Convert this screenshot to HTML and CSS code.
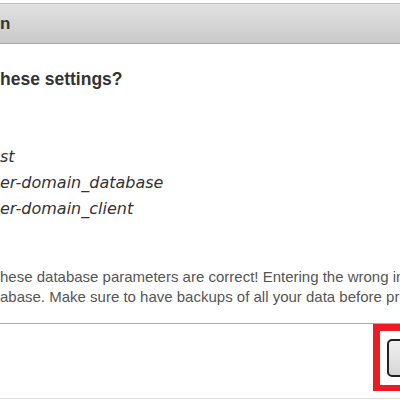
FILE: index.html
```html
<!DOCTYPE html>
<html>
<head>
<meta charset="utf-8">
<link rel="stylesheet" href="styles.css">
</head>
<body>
<div class="dialog">
  <div class="titlebar"><span class="title">n</span></div>
  <div class="content">
    <h2 class="question">hese settings?</h2>
    <div class="values">
      <div class="value">st</div>
      <div class="value">er-domain_database</div>
      <div class="value">er-domain_client</div>
    </div>
    <p class="warning">hese database parameters are correct! Entering the wrong in<br>abase. Make sure to have backups of all your data before pro</p>
  </div>
  <div class="footer">
    <div class="highlight"><button class="btn">OK</button></div>
  </div>
</div>
</body>
</html>
```
FILE: styles.css
```css
html, body {
  margin: 0;
  padding: 0;
  background: #ffffff;
  width: 400px;
  height: 400px;
  overflow: hidden;
}
.dialog {
  padding-top: 3px;
  white-space: nowrap;
}
.titlebar {
  height: 39px;
  border-top: 1px solid #bdbdbd;
  border-bottom: 1px solid #a9a9a9;
  background: linear-gradient(#e2e2e2, #c9c9c9);
  display: flex;
  align-items: center;
}
.title {
  font-family: "Liberation Sans", Arial, sans-serif;
  font-weight: bold;
  font-size: 17px;
  color: #333333;
}
.content {
  box-sizing: border-box;
  padding-top: 25px;
  height: 280px;
  border-bottom: 1px solid #aaaaaa;
  overflow: hidden;
}
.question {
  margin: 0;
  font-family: "Liberation Sans", Arial, sans-serif;
  font-weight: bold;
  font-size: 17.5px;
  line-height: 20px;
  color: #333333;
}
.values {
  margin-top: 55px;
  font-family: "DejaVu Sans", sans-serif;
  font-style: italic;
  font-size: 16px;
  line-height: 26px;
  color: #333333;
}
.warning {
  margin: 45px 0 0;
  font-family: "Liberation Sans", Arial, sans-serif;
  font-size: 15px;
  line-height: 20px;
  color: #555555;
}
.footer {
  box-sizing: border-box;
  display: flex;
  justify-content: flex-end;
  height: 75px;
  border-bottom: 1px solid #dddddd;
}
.highlight {
  flex: none;
  margin-right: -81px;
  border: 7px solid #ed1c24;
  border-bottom-width: 6px;
  padding: 8px 7px;
  height: 38px;
  display: flex;
  align-items: flex-start;
}
.btn {
  box-sizing: border-box;
  width: 80px;
  height: 38px;
  padding: 0;
  border: 2px solid #222222;
  border-radius: 5px;
  background: linear-gradient(#f0f0f0, #d6d6d6);
  font-family: "Liberation Sans", Arial, sans-serif;
  font-size: 14px;
  color: #333333;
}
```
